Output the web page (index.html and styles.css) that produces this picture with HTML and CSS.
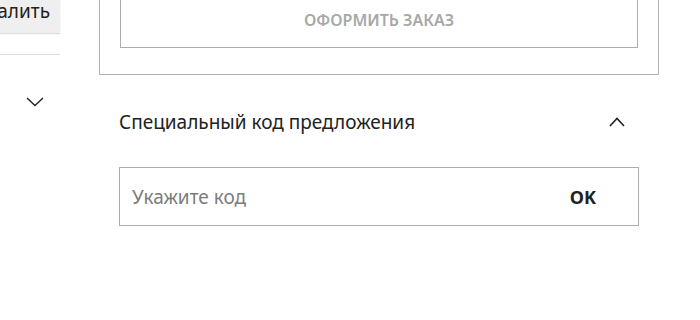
FILE: index.html
```html
<!DOCTYPE html>
<html lang="ru">
<head>
  <meta charset="UTF-8">
  <meta name="viewport" content="width=device-width, initial-scale=1.0">
  <title>Корзина</title>
  <link rel="stylesheet" href="styles.css">
</head>
<body>
  <div class="page">
    <div class="side">
      <button class="remove-btn">Удалить</button>
      <div class="divider"></div>
      <div class="toggle-row">
        <svg class="chevron" width="18" height="10" viewBox="0 0 18 10"><path d="M1 1l8 7.5L17 1" fill="none" stroke="#222" stroke-width="1.4"/></svg>
      </div>
    </div>
    <div class="main">
      <div class="summary">
        <button class="checkout-btn">ОФОРМИТЬ ЗАКАЗ</button>
      </div>
      <div class="promo">
        <div class="promo-head">
          <span>Специальный код предложения</span>
          <svg class="chevron" width="16" height="10" viewBox="0 0 16 10"><path d="M1 9l7-7.5L15 9" fill="none" stroke="#222" stroke-width="1.6"/></svg>
        </div>
        <div class="promo-field">
          <input type="text" placeholder="Укажите код">
          <button class="ok-btn">OK</button>
        </div>
      </div>
    </div>
  </div>
</body>
</html>
```

FILE: styles.css
```css
body {
  margin: 0;
  background: #fff;
  color: #222;
  font-family: 'Noto Sans', 'Open Sans', sans-serif;
  overflow: hidden;
}

.page {
  display: flex;
  align-items: flex-start;
  margin-top: -11px;
}

.side {
  flex: 0 0 90px;
  margin-left: -30px;
  margin-right: 39px;
}

.remove-btn {
  display: block;
  width: 100%;
  height: 44px;
  padding: 0 10px 0 0;
  border: none;
  background: #efefef;
  box-shadow: 0 1px 1px #ddd;
  font-family: inherit;
  font-size: 19px;
  color: #222;
  text-align: right;
  white-space: nowrap;
  overflow: hidden;
}

.divider {
  margin-top: 21px;
  border-bottom: 1px solid #ddd;
}

.toggle-row {
  display: flex;
  justify-content: flex-end;
  padding: 42px 16px 0 0;
}

.main {
  width: 560px;
}

.summary {
  border: 1px solid #b3b3b3;
  border-top: none;
  padding: 0 20px 26px 20px;
}

.checkout-btn {
  display: block;
  width: 100%;
  height: 59px;
  padding: 3px 0 0 0;
  border: 1px solid #adadad;
  border-top: none;
  background: #fff;
  font-family: inherit;
  font-size: 16px;
  font-weight: 600;
  color: #a8a8a8;
}

.promo {
  padding: 0 20px;
}

.promo-head {
  display: flex;
  justify-content: space-between;
  align-items: center;
  padding: 34px 14px 0 0;
  font-size: 19px;
}

.promo-field {
  display: flex;
  align-items: center;
  margin-top: 32px;
  height: 57px;
  border: 1px solid #adadad;
}

.promo-field input {
  flex: 1;
  min-width: 0;
  height: 100%;
  border: none;
  outline: none;
  padding: 0 0 0 12px;
  font-family: inherit;
  font-size: 19px;
  color: #222;
  background: transparent;
}

.promo-field input::placeholder {
  color: #7c7c7c;
}

.ok-btn {
  border: none;
  background: none;
  padding: 0 42px 0 20px;
  font-family: inherit;
  font-size: 18px;
  font-weight: 700;
  color: #222;
}
```
